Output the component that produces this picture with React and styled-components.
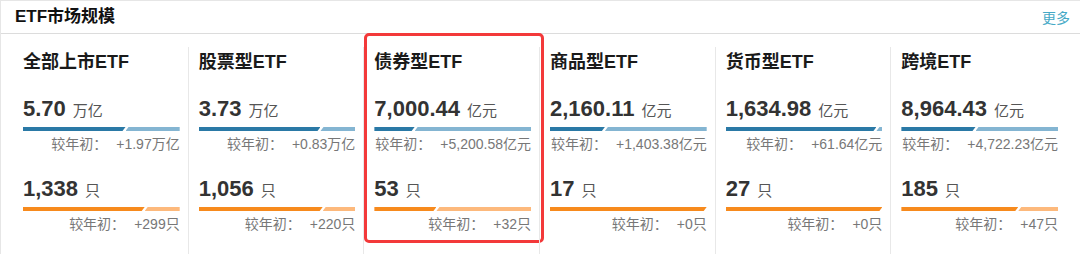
import React from 'react';
import styled, { createGlobalStyle } from 'styled-components';

const GlobalStyle = createGlobalStyle`
  html, body {
    margin: 0;
    padding: 0;
    background: #ffffff;
    overflow: hidden;
  }
  body {
    font-family: "Liberation Sans", "Noto Sans CJK SC", sans-serif;
  }
`

const Panel = styled.div`
  width: 100%;
  height: 253px;
  border-top: 1px solid #e6e6e6;
  border-left: 1px solid #e6e6e6;
  display: flex;
  flex-direction: column;
  box-sizing: content-box;
`

const Header = styled.div`
  height: 32px;
  border-bottom: 1px solid #dcdcdc;
  display: flex;
  align-items: center;
  justify-content: space-between;
  padding: 0 11px 0 14px;
`

const HeaderTitle = styled.h2`
  margin: 0;
  font-size: 17px;
  font-weight: 700;
  color: #111;
  line-height: 32px;
`

const MoreLink = styled.a`
  font-size: 14px;
  color: #45a9c6;
  text-decoration: none;
  cursor: pointer;
`

const Columns = styled.div`
  flex: 1;
  display: flex;
  padding: 13px 15px 0 12px;
`

const Column = styled.div`
  flex: 1;
  min-width: 0;
  position: relative;
  padding: 0 8px 0 10px;
  border-left: 1px solid #e8e8e8;
  box-sizing: border-box;

  &:first-child {
    border-left: none;
  }

  ${({ $highlight }) => $highlight && `
    &::after {
      content: '';
      position: absolute;
      top: -14px;
      left: 0;
      right: -5px;
      bottom: 11px;
      border: 3px solid #f3393a;
      border-radius: 5px;
      pointer-events: none;
    }
  `}
`

const Title = styled.div`
  height: 30px;
  line-height: 30px;
  font-size: 18px;
  font-weight: 700;
  color: #1a1a1a;
  white-space: nowrap;
`

const ValueRow = styled.div`
  display: flex;
  align-items: baseline;
  height: 26px;
  margin-top: ${({ $gap }) => $gap}px;
`

const Value = styled.span`
  font-size: 22px;
  line-height: 26px;
  font-weight: 700;
  color: #333;
`

const Unit = styled.span`
  margin-left: 7px;
  font-size: 15px;
  line-height: 16px;
  color: #555;
`

const Bar = styled.div`
  display: flex;
  height: 4px;
  margin-top: 5px;
`

const BarBase = styled.div`
  height: 100%;
  background: ${({ $color }) => $color};
  clip-path: polygon(0 0, 100% 0, calc(100% - 3px) 100%, 0 100%);
`

const BarGrowth = styled.div`
  flex: 1;
  height: 100%;
  background: ${({ $color }) => $color};
  clip-path: polygon(3px 0, 100% 0, 100% 100%, 0 100%);
`

const Change = styled.div`
  margin-top: 3px;
  height: 20px;
  line-height: 20px;
  font-size: 14px;
  color: #777;
  text-align: right;
  white-space: nowrap;
`

const ChangeValue = styled.span`
  margin-left: 9px;
`

const palette = {
  scale: ['#2a79a6', '#84b5d2'],
  count: ['#f78a1d', '#fdb97c'],
};

const data = [
  { name: '全部上市ETF', scale: '5.70', scaleUnit: '万亿', scaleChange: '1.97', count: '1,338', countChange: '299' },
  { name: '股票型ETF', scale: '3.73', scaleUnit: '万亿', scaleChange: '0.83', count: '1,056', countChange: '220' },
  { name: '债券型ETF', scale: '7,000.44', scaleUnit: '亿元', scaleChange: '5,200.58', count: '53', countChange: '32', highlight: true },
  { name: '商品型ETF', scale: '2,160.11', scaleUnit: '亿元', scaleChange: '1,403.38', count: '17', countChange: '0' },
  { name: '货币型ETF', scale: '1,634.98', scaleUnit: '亿元', scaleChange: '61.64', count: '27', countChange: '0' },
  { name: '跨境ETF', scale: '8,964.43', scaleUnit: '亿元', scaleChange: '4,722.23', count: '185', countChange: '47' },
];

const num = (s) => parseFloat(s.replace(/,/g, ''));

function SplitBar({ total, change, colors }) {
  const t = num(total);
  const c = num(change);
  const base = t > 0 ? ((t - c) / t) * 100 : 100;
  return (
    <Bar>
      <BarBase $color={colors[0]} style={{ width: `${base}%` }} />
      {c > 0 && <BarGrowth $color={colors[1]} />}
    </Bar>
  );
}

function Metric({ value, unit, change, changeUnit, colors, gap }) {
  return (
    <>
      <ValueRow $gap={gap}>
        <Value>{value}</Value>
        <Unit>{unit}</Unit>
      </ValueRow>
      <SplitBar total={value} change={change} colors={colors} />
      <Change>
        较年初：<ChangeValue>+{change}{changeUnit}</ChangeValue>
      </Change>
    </>
  );
}

function App() {
  return (
    <>
      <GlobalStyle />
      <Panel>
        <Header>
          <HeaderTitle>ETF市场规模</HeaderTitle>
          <MoreLink>更多</MoreLink>
        </Header>
        <Columns>
          {data.map((d) => (
            <Column key={d.name} $highlight={d.highlight}>
              <Title>{d.name}</Title>
              <Metric
                gap={19}
                value={d.scale}
                unit={d.scaleUnit}
                change={d.scaleChange}
                changeUnit={d.scaleUnit}
                colors={palette.scale}
              />
              <Metric
                gap={22}
                value={d.count}
                unit="只"
                change={d.countChange}
                changeUnit="只"
                colors={palette.count}
              />
            </Column>
          ))}
        </Columns>
      </Panel>
    </>
  );
}

export default App;
